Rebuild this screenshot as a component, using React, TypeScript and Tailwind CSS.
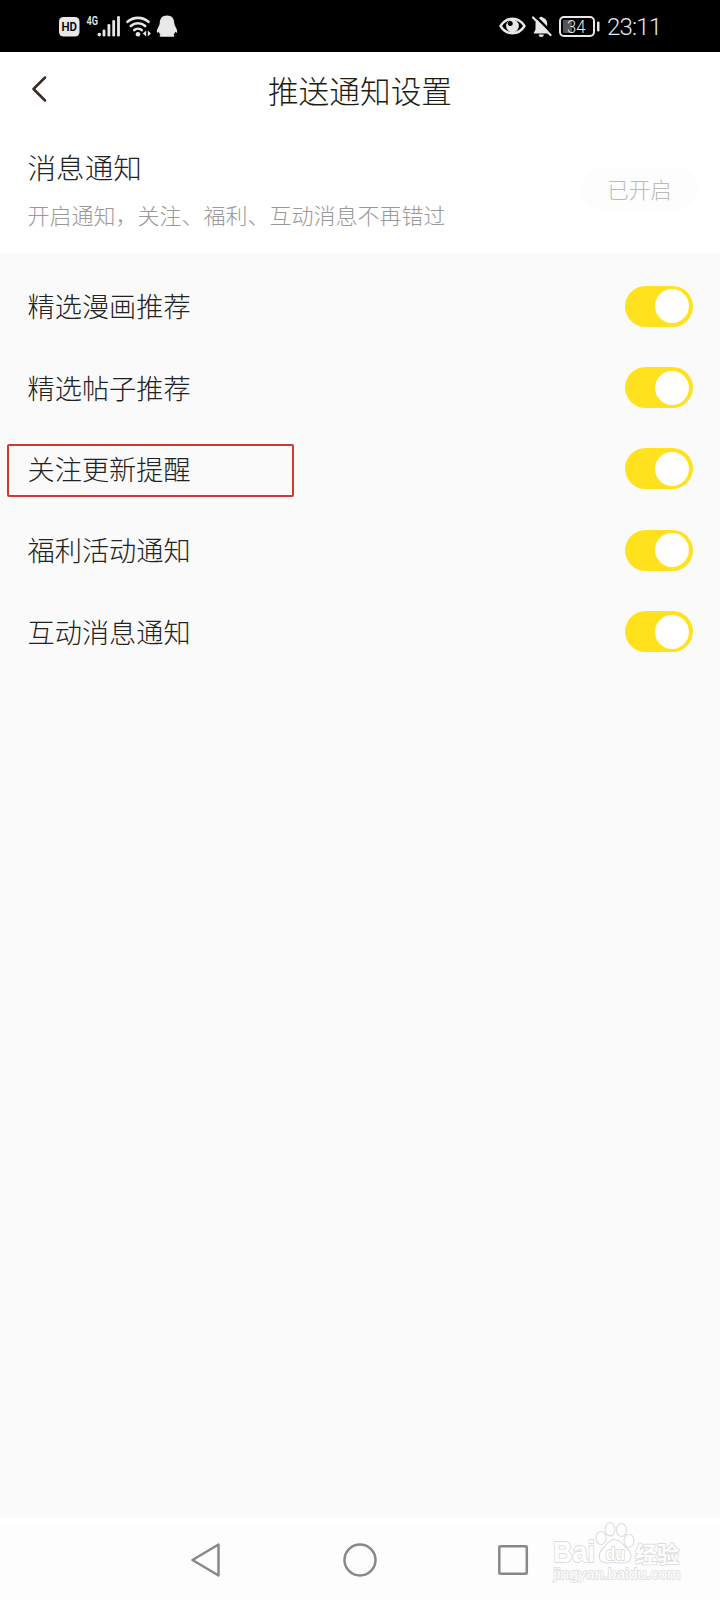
import React, { useState } from "react";

const rows = ["精选漫画推荐", "精选帖子推荐", "关注更新提醒", "福利活动通知", "互动消息通知"];

function StatusBar() {
  return (
    <div className="flex h-[52px] items-center bg-black pl-[59px] pr-[58px] text-[#e8e8e8]">
      {/* HD, signal, wifi and messenger icons */}
      <svg width="120" height="32" viewBox="0 0 120 32" className="shrink-0" fill="currentColor">
        <rect x="0" y="7" width="20.5" height="19.5" rx="4.5" />
        <text x="10.3" y="21.2" textAnchor="middle" fontSize="13" fontWeight="600" fill="#000" textLength="15.5" lengthAdjust="spacingAndGlyphs" fontFamily="Roboto">HD</text>
        <text x="27.5" y="15" fontSize="12.5" fontWeight="600" textLength="11.5" lengthAdjust="spacingAndGlyphs" fontFamily="Roboto">4G</text>
        <circle cx="40.3" cy="24.6" r="1.8" />
        <rect x="43.6" y="19.5" width="2.8" height="7" rx="1.3" />
        <rect x="48.5" y="14" width="2.8" height="12.5" rx="1.3" />
        <rect x="53.3" y="10" width="2.8" height="16.5" rx="1.3" />
        <rect x="58.1" y="6" width="2.8" height="20.5" rx="1.3" />
        <g fill="none" stroke="currentColor" strokeWidth="2.6" strokeLinecap="round">
          <path d="M68.5 11.8a16 16 0 0 1 21 0" />
          <path d="M71.8 16a10.8 10.8 0 0 1 14.4 0" />
          <path d="M75.3 20.1a5.6 5.6 0 0 1 7.4 0" />
        </g>
        <circle cx="79" cy="24.3" r="2.3" />
        <path d="M87.2 20.5v6l-3.4-3zM88.8 20.5v6l3.2-3z" />
        <path d="M108 5.5c-5 0-7.4 3.4-7.3 8.2-.3 2-3 5.1-2.9 7.8.2 1.7 1 1.6 2 .2.3 1.2.9 2.2 1.7 3-1.2.5-1.3 2 .2 2H114.3c1.5 0 1.4-1.5.2-2 .8-.8 1.4-1.8 1.7-3 1 1.4 1.8 1.5 2-.2.1-2.700-2.600-5.800-2.900-7.800.1-4.800-2.300-8.200-7.300-8.200z" />
      </svg>
      <div className="flex-1" />
      {/* eye comfort, muted bell */}
      <svg width="56" height="32" viewBox="0 0 56 32" className="shrink-0" fill="none" stroke="currentColor">
        <path d="M1.5 16C7.500 6.300 19.500 6.300 25.500 16 19.500 25.700 7.500 25.700 1.500 16z" strokeWidth="2.4" strokeLinejoin="round" />
        <circle cx="13.5" cy="16" r="6.4" fill="currentColor" stroke="none" />
        <circle cx="11.2" cy="13.6" r="2.5" fill="#000" stroke="none" />
        <g fill="currentColor" stroke="none">
          <path d="M34.5 23.5h16l-2.3-4V13.5c0-3-1.700-5-4.200-5.700a2 2 0 0 0-3.500 0c-2.400.7-4 2.700-4 5.700v6z" />
          <path d="M39.7 24.5h5a2.500 2.500 0 0 1-5 0z" />
        </g>
        <path d="M35.5 5.3l18.5 18.5" stroke="#000" strokeWidth="2.4" />
        <path d="M34 7.5l17.5 17.5" strokeWidth="2.2" strokeLinecap="round" />
      </svg>
      <svg width="42" height="32" viewBox="0 0 42 32" className="ml-[4px] shrink-0" fill="none">
        <rect x="1" y="7" width="34" height="19" rx="4" stroke="currentColor" strokeWidth="2" />
        <rect x="4" y="10" width="9" height="13" rx="1" fill="#555" />
        <rect x="38" y="11.5" width="2.5" height="10" rx="1" fill="currentColor" />
        <text x="8" y="22.7" fontSize="17.5" fill="currentColor" textLength="18.5" lengthAdjust="spacingAndGlyphs" fontFamily="Roboto">34</text>
      </svg>
      <span className="ml-[6px] mt-[2px] w-[55px] whitespace-nowrap font-['Roboto',sans-serif] text-[24px] font-light leading-[32px] tracking-[-0.8px]">23:11</span>
    </div>
  );
}

function Toggle({ on, onClick }: { on: boolean; onClick: () => void }) {
  return (
    <button
      onClick={onClick}
      className={`flex h-[41px] w-[68px] items-center rounded-full px-1 ${on ? "justify-end bg-[#ffe11e]" : "justify-start bg-gray-300"}`}
    >
      <span className="size-[34px] rounded-full bg-white" />
    </button>
  );
}

function Watermark() {
  return (
    <svg width="136" height="68" viewBox="0 0 136 68" className="absolute right-[34px] top-[4px]" fill="#fefefe" stroke="#dcdcdc" strokeWidth="1.8" strokeLinejoin="round">
      <text x="3" y="40" fontSize="30" fontWeight="700" textLength="42" lengthAdjust="spacingAndGlyphs" fontFamily="Liberation Sans" paintOrder="stroke">Bai</text>
      <g strokeWidth="1.1">
        <ellipse cx="51" cy="16" rx="5" ry="6.5" />
        <ellipse cx="60" cy="7.2" rx="5" ry="6.7" />
        <ellipse cx="71.5" cy="8" rx="5" ry="6.5" />
        <ellipse cx="79" cy="18.7" rx="5" ry="6.5" />
        <path d="M64.500 17.500c-6 0-8 6-12 9.500s-6 14 4.500 14c3 0 5-.5 8-.5s5 .5 8 .5c9.500 0 9.500-9.500 5-13.500s-7.500-10-13.500-10z" />
      </g>
      <text x="55.5" y="37.5" fontSize="18.5" fontWeight="700" strokeWidth="1.8" textLength="19.5" lengthAdjust="spacingAndGlyphs" fontFamily="Liberation Sans" paintOrder="stroke">du</text>
      <text x="85" y="39.5" fontSize="22" fontWeight="700" strokeWidth="1.8" textLength="44" lengthAdjust="spacingAndGlyphs" fontFamily="Noto Sans CJK SC" paintOrder="stroke">经验</text>
      <text x="3.500" y="57" fontSize="15" fontWeight="400" stroke="#e2e2e2" strokeWidth="1.800" textLength="127" lengthAdjust="spacingAndGlyphs" fontFamily="Liberation Sans" paintOrder="stroke">jingyan.baidu.com</text>
    </svg>
  );
}

export default function App() {
  const [enabled, setEnabled] = useState([true, true, true, true, true]);

  const toggle = (idx: number) => {
    setEnabled(enabled.map((v, i) => (i === idx ? !v : v)));
  };

  return (
    <div className="flex h-[1600px] w-[720px] flex-col overflow-hidden bg-[#fafafa] font-['Noto_Sans_CJK_SC',sans-serif] font-light">
      <StatusBar />

      {/* Header */}
      <div className="grid h-[76px] grid-cols-[80px_1fr_80px] items-center bg-white">
        <svg width="20" height="28" viewBox="0 0 20 28" className="-mt-[2px] ml-[30px]" fill="none" stroke="#3a2a20" strokeWidth="2.5" strokeLinecap="round" strokeLinejoin="round">
          <path d="M15 2.5L3.5 14 15 25.5" />
        </svg>
        <h1 className="text-center text-[30.7px] leading-[74px] text-[#201c12]">推送通知设置</h1>
      </div>

      {/* Main notification switch */}
      <div className="flex h-[125px] items-start justify-between bg-white pl-[27.5px] pr-[22px]">
        <div className="pt-[18px]">
          <h2 className="text-[28.6px] leading-[42px] text-[#222]">消息通知</h2>
          <p className="mt-[9px] text-[22px] leading-[34px] text-[#999]">开启通知，关注、福利、互动消息不再错过</p>
        </div>
        <div className="mt-[39px] flex h-[44px] w-[117px] items-center justify-center rounded-full bg-[#fdfdfd] text-[21.5px] text-[#bbb]">已开启</div>
      </div>

      {/* Options */}
      <div className="flex flex-1 flex-col pt-[12.5px]">
        {rows.map((label, idx) => (
          <div key={label} className="relative flex h-[81.4px] items-center justify-between pl-[27.5px] pr-[27.5px]">
            {idx === 2 && (
              <div className="absolute left-[7px] top-[16px] h-[53px] w-[287px] rounded-[2px] border-2 border-[#cf3a30]" />
            )}
            <span className="-mt-[2px] text-[27.2px] leading-[40px] text-[#222]">{label}</span>
            <Toggle on={enabled[idx]} onClick={() => toggle(idx)} />
          </div>
        ))}
      </div>

      {/* System navigation */}
      <div className="relative flex h-[82px] justify-center border-t-[6px] border-white bg-[#fdfdfd] pt-[18px]">
        <svg width="360" height="36" viewBox="0 0 360 36" fill="none" stroke="#888" strokeWidth="2.5" strokeLinejoin="round">
          <path d="M38.5 2.5v31L12.5 18z" />
          <circle cx="180" cy="18" r="15.5" />
          <rect x="319.3" y="4.3" width="27.5" height="27.5" rx="1" />
        </svg>
        <div className="absolute -top-[6px] right-0 h-[76px] w-[170px]">
          <Watermark />
        </div>
      </div>
    </div>
  );
}
